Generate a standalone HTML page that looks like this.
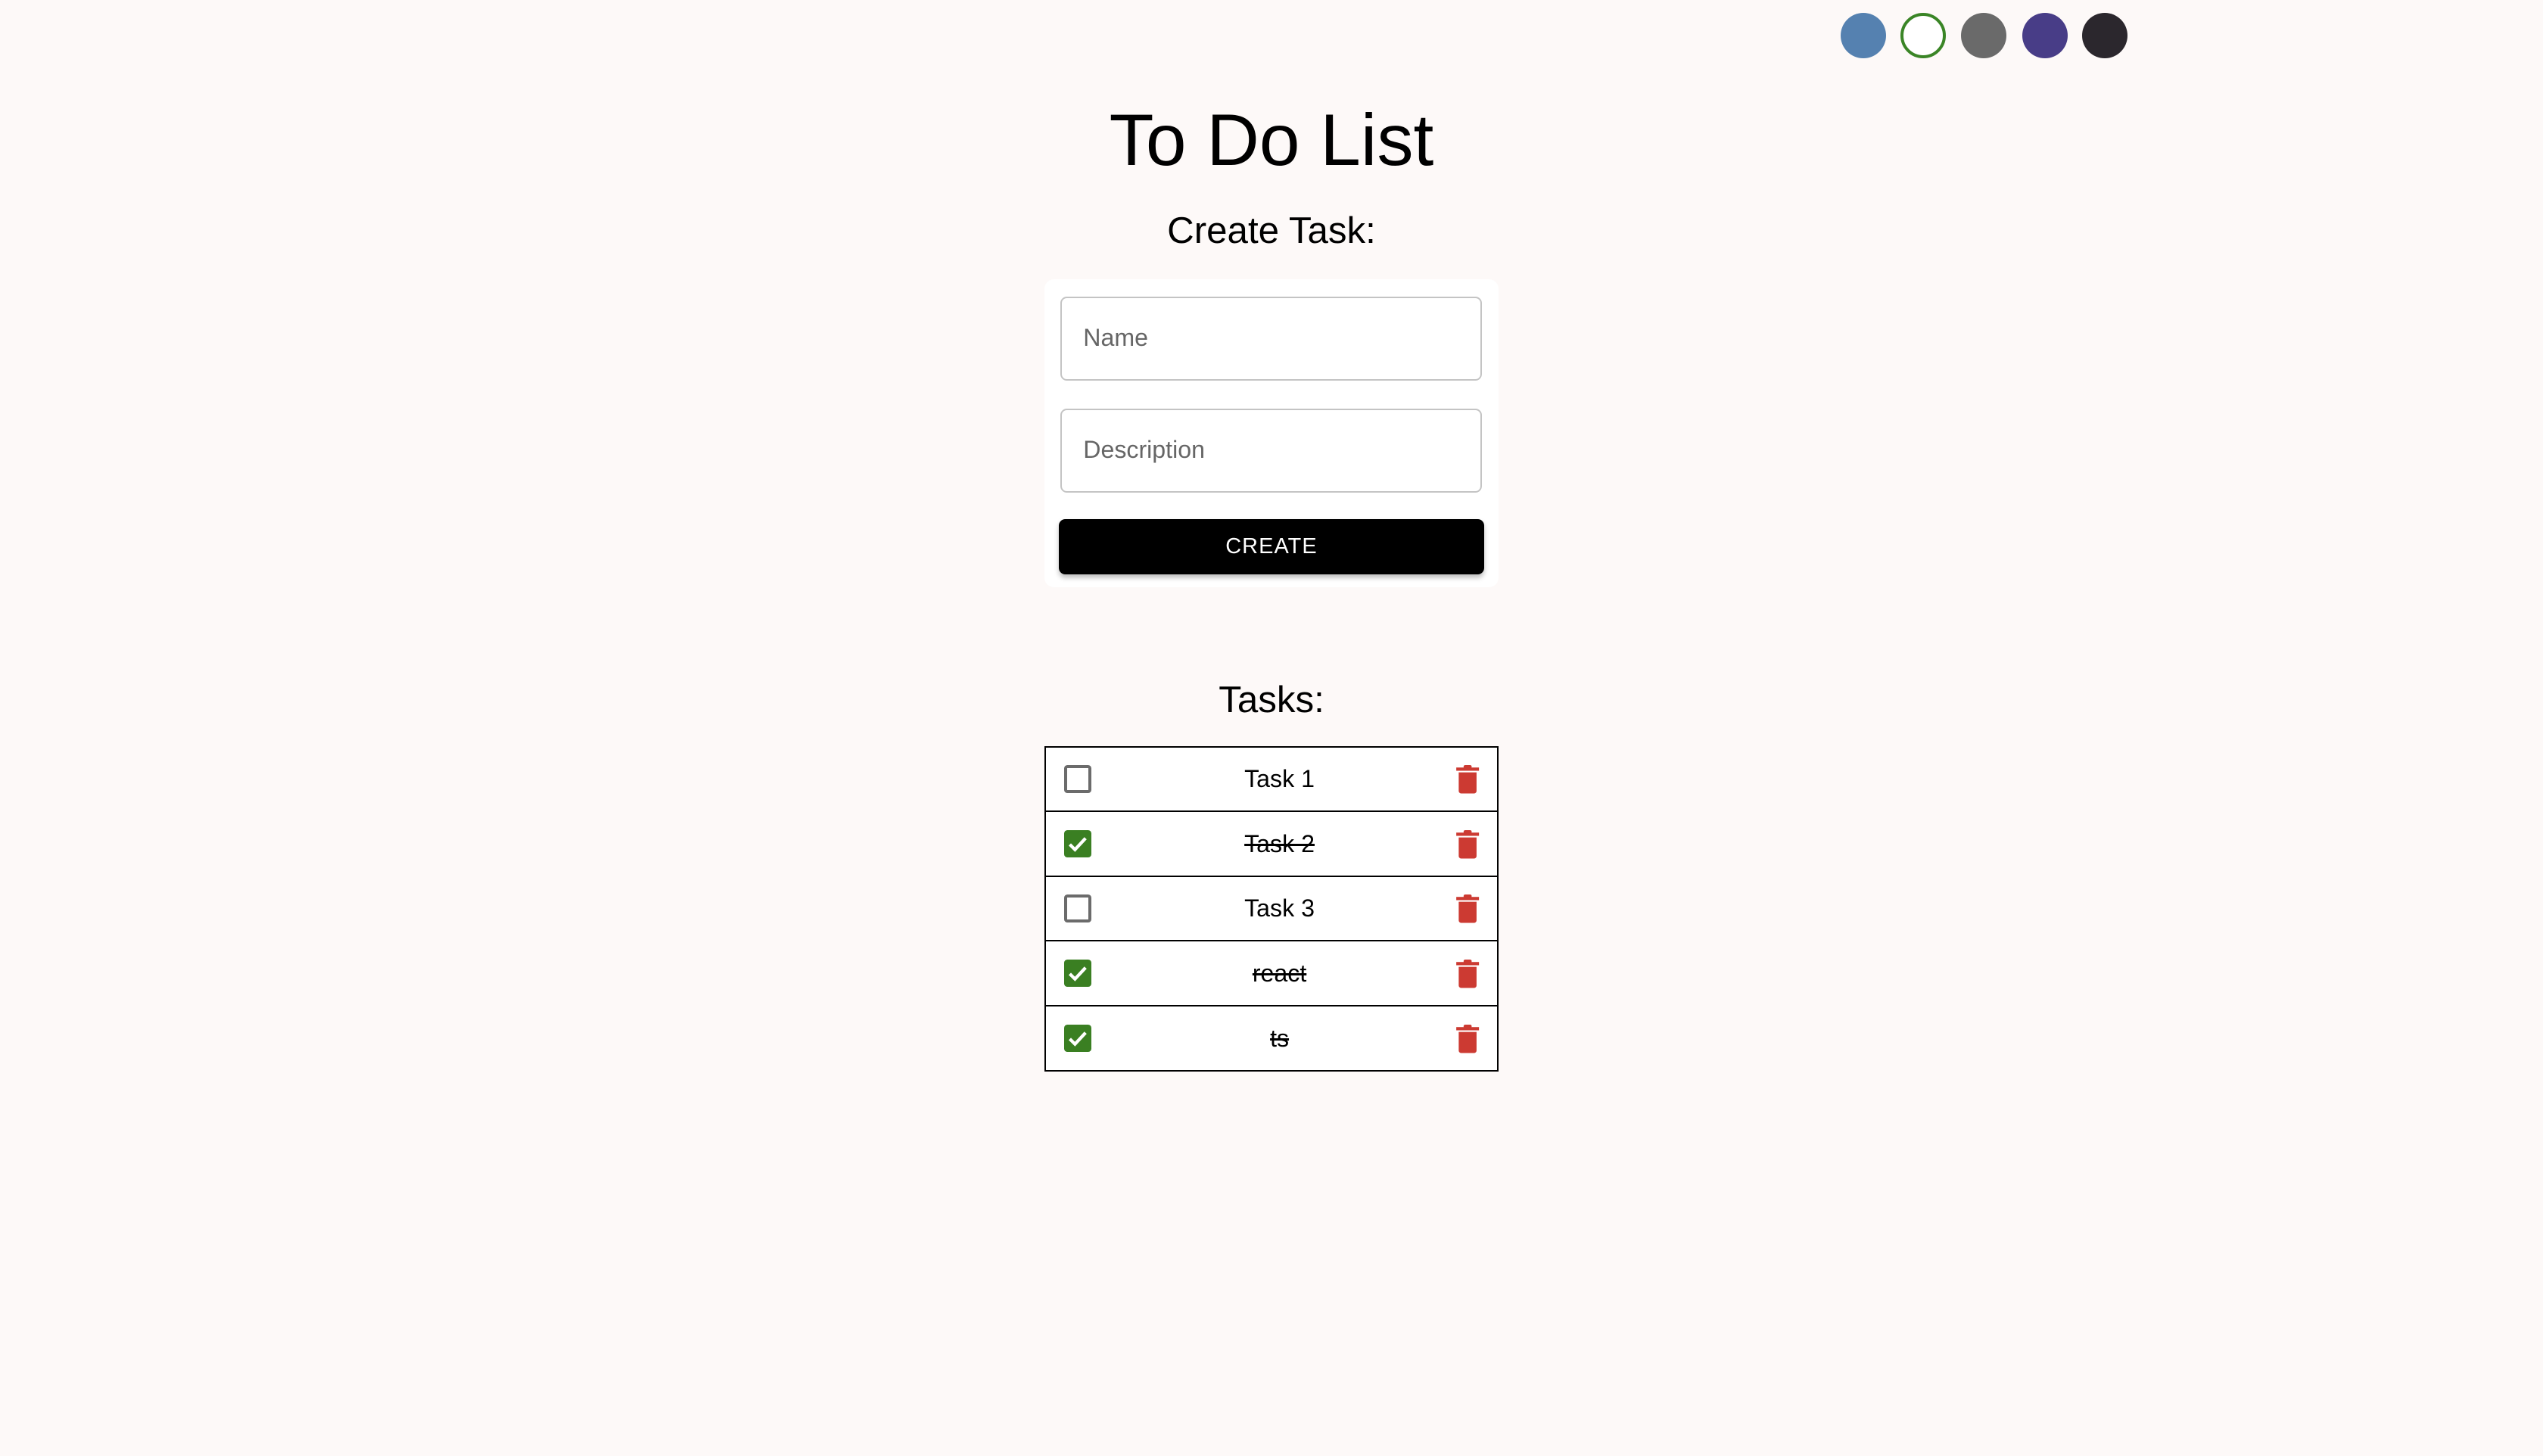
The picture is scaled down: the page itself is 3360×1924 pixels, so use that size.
<!DOCTYPE html>
<html><head><meta charset="utf-8"><style>
html,body{margin:0;padding:0;}
body{width:3360px;height:1924px;background:#fdf9f8;overflow:hidden;font-family:"Liberation Sans",Arial,sans-serif;}
#w{zoom:2.142857;position:relative;width:1568px;height:898px;}
.c{position:absolute;top:8px;width:28px;height:28px;border-radius:50%;box-sizing:border-box;}
.t{position:absolute;left:0;width:1568px;text-align:center;color:#000;}
.card{position:absolute;left:644px;top:172px;width:280px;height:190px;background:#fff;border-radius:6px;}
.inp{position:absolute;left:654px;width:258px;height:50px;border:1px solid #c4c4c4;border-radius:4px;background:#fff;}
.inp span{position:absolute;left:13px;top:16px;font-size:15px;color:#666;}
.btn{position:absolute;left:653px;top:320px;width:262px;height:34px;background:#000;border-radius:4px;color:#fff;font-size:13.5px;letter-spacing:.5px;text-align:center;line-height:34px;box-shadow:0 2px 3px rgba(0,0,0,.25);}
.tbl{position:absolute;left:644px;top:460px;width:278px;border:1px solid #000;background:#fff;}
.row{position:relative;height:39px;border-top:1px solid #000;}
.row:first-child{border-top:none;}
.row .tx{position:absolute;left:10px;right:0;top:11px;text-align:center;font-size:15px;}
.row .tx.s{text-decoration:line-through;}
.cb{position:absolute;left:11px;top:11px;width:17px;height:17px;box-sizing:border-box;border-radius:2px;}
.cb.u{border:2px solid #6b6b6b;}
.cb.k{background:#3a7f22;}
.tr{position:absolute;left:252px;top:11px;}
</style></head><body><div id="w">
<div class="c" style="left:1135px;background:#5581b0"></div>
<div class="c" style="left:1172px;border:2px solid #3a8526;background:#fff"></div>
<div class="c" style="left:1209px;background:#6a6a6a"></div>
<div class="c" style="left:1247px;background:#483d87"></div>
<div class="c" style="left:1284px;background:#2b272d"></div>
<div class="t" style="top:61px;font-size:45px;">To Do List</div>
<div class="t" style="top:129px;font-size:23px;">Create Task:</div>
<div class="card"></div>
<div class="inp" style="top:183px"><span>Name</span></div>
<div class="inp" style="top:252px"><span>Description</span></div>
<div class="btn">CREATE</div>
<div class="t" style="top:418px;font-size:23px;">Tasks:</div>
<div class="tbl">
<div class="row"><div class="cb u"></div><div class="tx">Task 1</div><svg class="tr" width="16" height="18" viewBox="0 0 16 18"><rect x="1" y="1.5" width="14" height="2" fill="#cc3a32"/><rect x="5.5" y="0" width="5" height="2" rx="1" fill="#cc3a32"/><path d="M2.5 4.5h11v11.5a1.5 1.5 0 0 1-1.5 1.5h-8a1.5 1.5 0 0 1-1.5-1.5z" fill="#cc3a32"/></svg></div>
<div class="row"><div class="cb k"><svg width="17" height="17" viewBox="0 0 17 17"><path d="M3.5 8.8l3.2 3.2 6.5-7" stroke="#fff" stroke-width="2" fill="none"/></svg></div><div class="tx s">Task 2</div><svg class="tr" width="16" height="18" viewBox="0 0 16 18"><rect x="1" y="1.5" width="14" height="2" fill="#cc3a32"/><rect x="5.5" y="0" width="5" height="2" rx="1" fill="#cc3a32"/><path d="M2.5 4.5h11v11.5a1.5 1.5 0 0 1-1.5 1.5h-8a1.5 1.5 0 0 1-1.5-1.5z" fill="#cc3a32"/></svg></div>
<div class="row"><div class="cb u"></div><div class="tx">Task 3</div><svg class="tr" width="16" height="18" viewBox="0 0 16 18"><rect x="1" y="1.5" width="14" height="2" fill="#cc3a32"/><rect x="5.5" y="0" width="5" height="2" rx="1" fill="#cc3a32"/><path d="M2.5 4.5h11v11.5a1.5 1.5 0 0 1-1.5 1.5h-8a1.5 1.5 0 0 1-1.5-1.5z" fill="#cc3a32"/></svg></div>
<div class="row"><div class="cb k"><svg width="17" height="17" viewBox="0 0 17 17"><path d="M3.5 8.8l3.2 3.2 6.5-7" stroke="#fff" stroke-width="2" fill="none"/></svg></div><div class="tx s">react</div><svg class="tr" width="16" height="18" viewBox="0 0 16 18"><rect x="1" y="1.5" width="14" height="2" fill="#cc3a32"/><rect x="5.5" y="0" width="5" height="2" rx="1" fill="#cc3a32"/><path d="M2.5 4.5h11v11.5a1.5 1.5 0 0 1-1.5 1.5h-8a1.5 1.5 0 0 1-1.5-1.5z" fill="#cc3a32"/></svg></div>
<div class="row"><div class="cb k"><svg width="17" height="17" viewBox="0 0 17 17"><path d="M3.5 8.8l3.2 3.2 6.5-7" stroke="#fff" stroke-width="2" fill="none"/></svg></div><div class="tx s">ts</div><svg class="tr" width="16" height="18" viewBox="0 0 16 18"><rect x="1" y="1.5" width="14" height="2" fill="#cc3a32"/><rect x="5.5" y="0" width="5" height="2" rx="1" fill="#cc3a32"/><path d="M2.5 4.5h11v11.5a1.5 1.5 0 0 1-1.5 1.5h-8a1.5 1.5 0 0 1-1.5-1.5z" fill="#cc3a32"/></svg></div>
</div>
</div></body></html>
